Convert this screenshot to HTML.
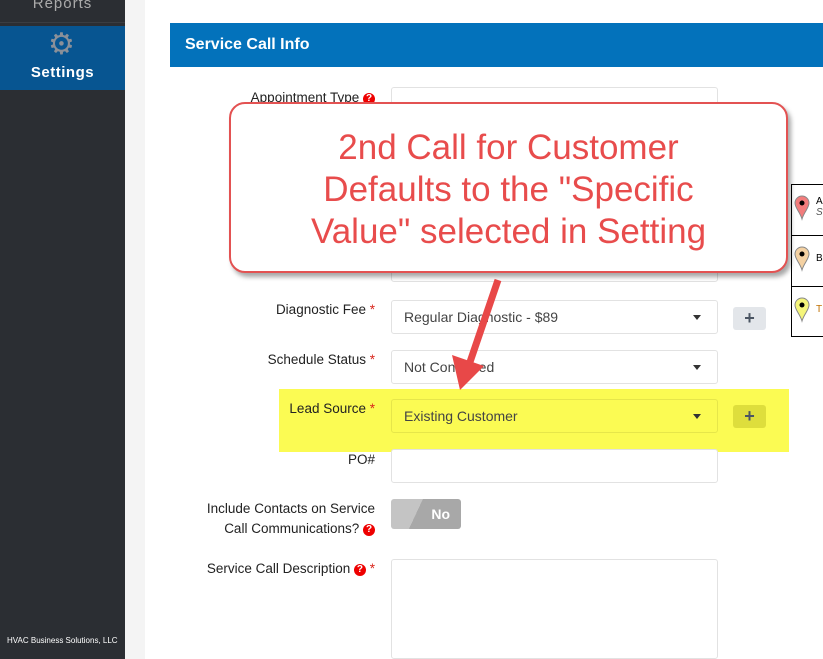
<!DOCTYPE html>
<html><head><style>
body{margin:0;width:823px;height:659px;overflow:hidden;position:relative;font-family:"Liberation Sans",sans-serif;background:#fff}
.sb{position:absolute;left:0;top:0;width:125px;height:659px;background:#2b2e33}
.strip{position:absolute;left:125px;top:0;width:20px;height:659px;background:#f4f4f4}
.lbl{position:absolute;right:448px;font-size:13.5px;color:#222;text-align:right;line-height:20px}
.req{color:#d9261c}
.q{display:inline-block;width:12px;height:12px;border-radius:6px;background:#e00;color:#fff;font-size:10px;font-weight:bold;text-align:center;line-height:12px;vertical-align:1px}
.inp{position:absolute;left:391px;width:325px;height:32px;border:1px solid #e2e2e2;border-radius:3px;background:#fff;font-size:14px;color:#444;line-height:32px;box-sizing:content-box}
.inp span{padding-left:12px}
.caret{position:absolute;right:16px;top:14px;border-left:4px solid transparent;border-right:4px solid transparent;border-top:5px solid #333}
.plus{position:absolute;left:733px;width:33px;height:23px;background:#e3e6ea;border-radius:3px;color:#4b5563;font-weight:bold;font-size:18px;text-align:center;line-height:23px}
</style></head><body>
<div class="sb">
<div style="position:absolute;top:-5px;width:125px;text-align:center;color:#aaa;font-size:15px;letter-spacing:1px">Reports</div>
<div style="position:absolute;top:22px;width:125px;height:1px;background:#3a3d42"></div>
<div style="position:absolute;top:26px;width:125px;height:64px;background:#075591">
<div style="position:absolute;left:48px;top:4px;font-size:30px;color:#8a9099;line-height:30px">⚙</div>
<div style="position:absolute;top:38px;width:125px;text-align:center;color:#fff;font-size:15px;font-weight:bold;letter-spacing:.5px">Settings</div></div>
<div style="position:absolute;bottom:14px;left:7px;color:#fff;font-size:8px">HVAC Business Solutions, LLC</div>
</div>
<div class="strip"></div>
<div style="position:absolute;left:170px;top:23px;width:653px;height:44px;background:#0372bb;color:#fff;font-weight:bold;font-size:16px;line-height:44px;padding-left:15px;box-sizing:border-box">Service Call Info</div>

<div class="lbl" style="top:88px">Appointment Type <span class="q">?</span></div>
<div class="inp" style="top:87px;height:30px"></div>
<div class="inp" style="top:250px;height:30px"></div>

<div style="position:absolute;left:279px;top:389px;width:510px;height:63px;background:#fbfb40;opacity:.9"></div>

<div class="lbl" style="top:300px">Diagnostic Fee <span class="req">*</span></div>
<div class="inp" style="top:300px"><span>Regular Diagnostic - $89</span><div class="caret"></div></div>
<div class="plus" style="top:307px">+</div>
<div class="lbl" style="top:350px">Schedule Status <span class="req">*</span></div>
<div class="inp" style="top:350px"><span>Not Confirmed</span><div class="caret"></div></div>
<div class="lbl" style="top:399px">Lead Source <span class="req">*</span></div>
<div class="inp" style="top:399px;background:transparent;border-color:#e6e64a"><span>Existing Customer</span><div class="caret"></div></div>
<div class="plus" style="top:405px;background:#dede3c">+</div>
<div class="lbl" style="top:450px">PO#</div>
<div class="inp" style="top:449px"></div>
<div class="lbl" style="top:499px">Include Contacts on Service<br>Call Communications? <span class="q">?</span></div>
<div style="position:absolute;left:391px;top:499px;width:70px;height:30px;border-radius:3px;background:linear-gradient(115deg,#c4c4c4 0 38%,#a8a8a8 38%);color:#fff;font-weight:bold;font-size:14px;line-height:30px;text-align:right;padding-right:11px;box-sizing:border-box">No</div>
<div class="lbl" style="top:559px">Service Call Description <span class="q">?</span> <span class="req">*</span></div>
<div class="inp" style="top:559px;height:98px"></div>

<div style="position:absolute;left:791px;top:184px;width:40px;height:153px;border:1px solid #000;box-sizing:border-box">
<div style="height:50px;border-bottom:1px solid #000"></div><div style="height:50px;border-bottom:1px solid #000"></div></div>
<svg style="position:absolute;left:794px;top:195px" width="20" height="130">
<path d="M8 1a7 7 0 0 1 7 7c0 5-5 9-7 16c-2-7-7-11-7-16a7 7 0 0 1 7-7z" fill="#f27c7c" stroke="#888"/><circle cx="8" cy="8" r="2.5"/>
<path d="M8 52a7 7 0 0 1 7 7c0 5-5 9-7 16c-2-7-7-11-7-16a7 7 0 0 1 7-7z" fill="#f4d1a2" stroke="#888"/><circle cx="8" cy="59" r="2.5"/>
<path d="M8 103a7 7 0 0 1 7 7c0 5-5 9-7 16c-2-7-7-11-7-16a7 7 0 0 1 7-7z" fill="#f5f57a" stroke="#888"/><circle cx="8" cy="110" r="2.5"/>
</svg>
<div style="position:absolute;left:816px;top:196px;font-size:10px">A<br><i style="color:#555">S</i></div>
<div style="position:absolute;left:816px;top:253px;font-size:10px">B</div>
<div style="position:absolute;left:816px;top:304px;font-size:10px;color:#c07000">T</div>

<div style="position:absolute;left:229px;top:102px;width:559px;height:171px;border:2px solid #e35252;border-radius:16px;background:#fff;box-shadow:3px 4px 5px rgba(0,0,0,.35);box-sizing:border-box;color:#e84c4c;font-size:35px;text-align:center;line-height:42px;padding-top:23px">2nd Call for Customer<br>Defaults to the "Specific<br>Value" selected in Setting</div>
<svg style="position:absolute;left:0;top:0" width="823" height="659"><line x1="498" y1="280" x2="470" y2="362" stroke="#e84848" stroke-width="7"/><polygon points="452,355 484,366 460,390" fill="#e84848"/></svg>
</body></html>
